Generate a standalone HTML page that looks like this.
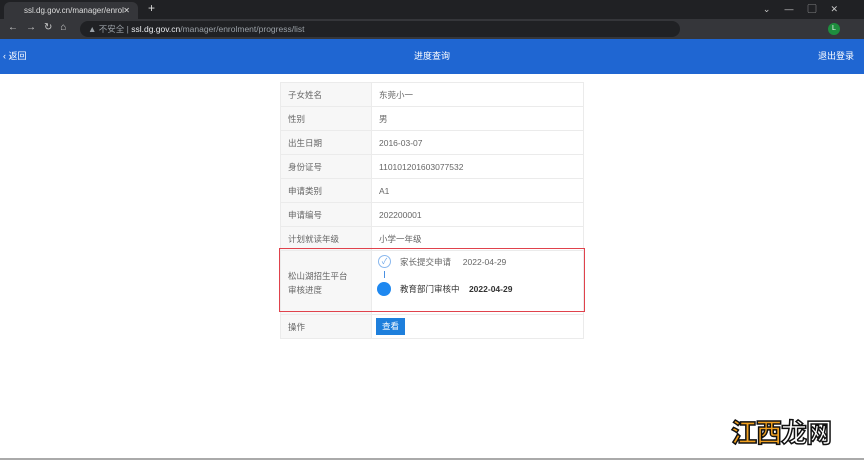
<!DOCTYPE html>
<html><head><meta charset="utf-8"><style>
*{margin:0;padding:0;box-sizing:border-box}
body{width:864px;height:460px;overflow:hidden;background:#fff;font-family:"Liberation Sans","Noto Sans CJK SC",sans-serif;position:relative}
.tabs{position:absolute;left:0;top:0;width:864px;height:19px;background:#202124}
.tab{position:absolute;left:4px;top:2px;width:134px;height:17px;background:#35363a;border-radius:6px 6px 0 0;color:#ddd;font-size:8px;line-height:17px;padding-left:20px}
.addr{position:absolute;left:0;top:19px;width:864px;height:20px;background:#35363a}
.url{position:absolute;left:80px;top:2px;width:600px;height:16px;background:#202124;border-radius:8px;font-size:8.5px;line-height:16px;color:#9aa0a6;padding-left:8px}
.url b{color:#e8eaed;font-weight:normal}
.hdr{position:absolute;left:0;top:39px;width:864px;height:35px;background:#1f66d2;color:#fff;font-size:9px;line-height:35px}
table{position:absolute;left:280px;top:82px;width:304px;border-collapse:collapse;font-size:8.5px;color:#666}
td{border:1px solid #ebebeb;height:24px;padding-left:7px}
td.l{width:91px;background:#f7f7f7}
.red{position:absolute;left:279px;top:248px;width:306px;height:64px;border:1.5px solid #e0424c}
.wm{position:absolute;left:731px;top:413px;font-size:26px;font-weight:bold;-webkit-text-stroke:1.5px #111;letter-spacing:-1px}
</style></head><body>
<div class="tabs"><div class="tab">ssl.dg.gov.cn/manager/enrol<span style="position:absolute;right:8px">✕</span></div><span style="position:absolute;left:148px;top:1px;color:#ddd;font-size:12px">+</span><span style="position:absolute;right:12px;top:2px;color:#ccc;font-size:9px;letter-spacing:14px">⌄—▢✕</span></div>
<div class="addr"><span style="position:absolute;left:8px;top:3px;color:#ccc;font-size:10px;letter-spacing:8px">←→↻⌂</span><div class="url">▲ 不安全 | <b>ssl.dg.gov.cn</b>/manager/enrolment/progress/list</div>
<span style="position:absolute;left:828px;top:4px;width:12px;height:12px;border-radius:50%;background:#1e8e3e;color:#fff;font-size:7px;text-align:center;line-height:12px">L</span></div>
<div class="hdr"><span style="position:absolute;left:3px">‹ 返回</span><span style="position:absolute;left:414px">进度查询</span><span style="position:absolute;right:10px">退出登录</span></div>
<table>
<tr><td class="l">子女姓名</td><td>东莞小一</td></tr>
<tr><td class="l">性别</td><td>男</td></tr>
<tr><td class="l">出生日期</td><td>2016-03-07</td></tr>
<tr><td class="l">身份证号</td><td>110101201603077532</td></tr>
<tr><td class="l">申请类别</td><td>A1</td></tr>
<tr><td class="l">申请编号</td><td>202200001</td></tr>
<tr><td class="l">计划就读年级</td><td>小学一年级</td></tr>
<tr><td class="l" style="height:64px;line-height:14px">松山湖招生平台<br>审核进度</td><td style="position:relative">
<span style="position:absolute;left:6px;top:4px;width:13px;height:13px;border:1px solid #8ab8ee;border-radius:50%;color:#6aa6ea;font-size:8px;text-align:center;line-height:12px">✓</span>
<span style="position:absolute;left:28px;top:5px">家长提交申请&nbsp;&nbsp;&nbsp;&nbsp;&nbsp;2022-04-29</span>
<span style="position:absolute;left:12px;top:20px;width:1px;height:7px;background:#4a90e2"></span>
<span style="position:absolute;left:5px;top:31px;width:14px;height:14px;background:#1e88f0;border-radius:50%"></span>
<span style="position:absolute;left:28px;top:32px;color:#333">教育部门审核中&nbsp;&nbsp;&nbsp;&nbsp;<b>2022-04-29</b></span>
</td></tr>
<tr><td class="l">操作</td><td><span style="display:inline-block;background:#1e7fdc;color:#fff;padding:0 6px;line-height:17px;margin-left:-3px">查看</span></td></tr>
</table>
<div class="red"></div>
<div class="wm"><span style="color:#f0a020">江西</span><span style="color:#fff">龙网</span></div>
<div style="position:absolute;left:0;top:458px;width:864px;height:2px;background:#aaa"></div>
</body></html>
